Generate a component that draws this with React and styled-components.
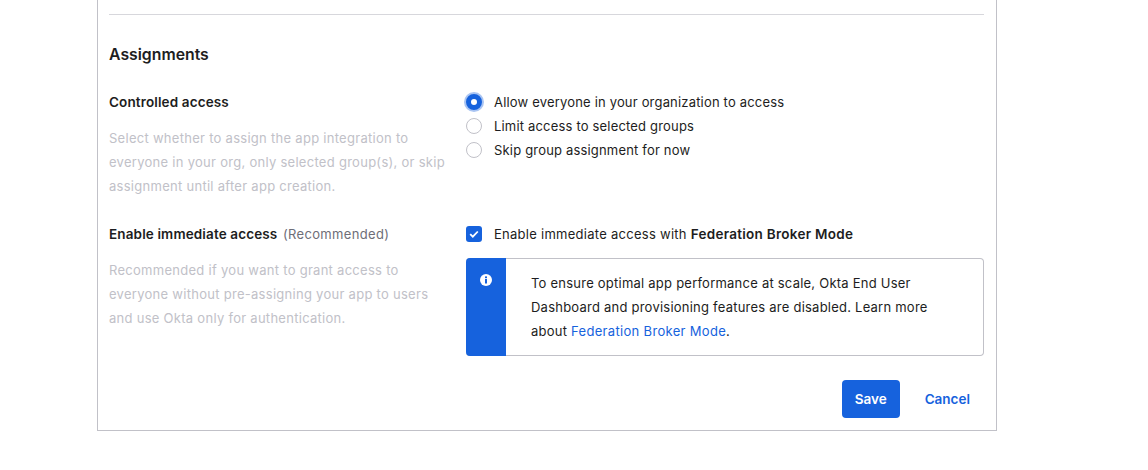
import React from 'react'
import styled, { createGlobalStyle } from 'styled-components'

const Global = createGlobalStyle`
html, body {
  margin: 0;
  padding: 0;
  background: #fff;
  font-family: Inter, "Liberation Sans", sans-serif;
  color: #1d1d21;
}
`

const Panel = styled.div`
  box-sizing: border-box;
  width: 900px;
  height: 431px;
  margin-left: 97px;
  padding: 14px 12px 0 11px;
  border: 1px solid #c1c1c8;
  border-top: none;
`

const Divider = styled.hr`
  margin: 0;
  border: none;
  border-top: 1px solid #d7d7dc;
`

const Title = styled.h2`
  margin: 30px 0 0;
  font-size: 15.8px;
  line-height: 20px;
  font-weight: 600;
  color: #1d1d21;
`

const Row = styled.div`
  display: grid;
  grid-template-columns: 357px 518px;
  margin-top: ${props => props.top}px;
`

const Label = styled.div`
  font-size: 13.5px;
  line-height: 24px;
  font-weight: 600;
  letter-spacing: 0.13px;
`

const Hint = styled.span`
  margin-left: 2px;
  font-size: 13px;
  font-weight: 400;
  letter-spacing: 0.35px;
  color: #6e6e78;
`

const Desc = styled.p`
  width: 340px;
  margin: 12px 0 0;
  font-size: 13px;
  line-height: 24px;
  letter-spacing: 0.28px;
  color: #c1c1c8;
`

const Option = styled.label`
  display: flex;
  align-items: center;
  height: 24px;
  font-size: 13px;
  letter-spacing: 0.18px;
`

const Radio = styled.span`
  box-sizing: border-box;
  width: 16px;
  height: 16px;
  margin-right: 12px;
  border-radius: 50%;
  ${props => props.checked
    ? 'border: 5px solid #1662dd; background: #fff; box-shadow: 0 0 0 2px #a9c4f2;'
    : 'border: 1.5px solid #c1c1c8; background: #fff;'}
`

const Check = styled.span`
  display: flex;
  align-items: center;
  justify-content: center;
  width: 16px;
  height: 16px;
  margin-right: 12px;
  border-radius: 3px;
  background: #1662dd;
`

const CheckText = styled.span`
  letter-spacing: 0.27px;
`

const Strong = styled.b`
  font-size: 13.5px;
  font-weight: 600;
`

const Callout = styled.div`
  box-sizing: border-box;
  display: flex;
  height: 98px;
  margin-top: 12px;
  border: 1px solid #c1c1c8;
  border-left: none;
  border-radius: 4px;
`

const CalloutBar = styled.div`
  flex: none;
  display: flex;
  justify-content: center;
  width: 40px;
  margin: -1px 0;
  padding-top: 16px;
  box-sizing: border-box;
  height: 98px;
  background: #1662dd;
  border-radius: 4px 0 0 4px;
`

const CalloutText = styled.p`
  margin: 0;
  padding: 12px 40px 0 25px;
  font-size: 13px;
  line-height: 24px;
  letter-spacing: 0.23px;
`

const A = styled.a`
  color: #1662dd;
  text-decoration: none;
  letter-spacing: 0.32px;
`

const Actions = styled.div`
  display: flex;
  justify-content: flex-end;
  align-items: center;
  gap: 25px;
  margin-top: 24px;
  padding-right: 14px;
`

const Save = styled.button`
  width: 58px;
  height: 38px;
  border: none;
  border-radius: 4px;
  background: #1662dd;
  color: #fff;
  font: 600 13.5px Inter, "Liberation Sans", sans-serif;
`

const Cancel = styled.button`
  padding: 0;
  border: none;
  background: none;
  color: #1662dd;
  font: 600 13.5px Inter, "Liberation Sans", sans-serif;
`

export default function App() {
  return (
    <>
      <Global />
      <Panel>
        <Divider />
        <Title>Assignments</Title>
        <Row top={25}>
          <div>
            <Label>Controlled access</Label>
            <Desc>
              Select whether to assign the app integration to everyone in your org, only selected group(s), or skip assignment until after app creation.
            </Desc>
          </div>
          <div>
            <Option><Radio checked />Allow everyone in your organization to access</Option>
            <Option><Radio />Limit access to selected groups</Option>
            <Option><Radio />Skip group assignment for now</Option>
          </div>
        </Row>
        <Row top={24}>
          <div>
            <Label>Enable immediate access <Hint>(Recommended)</Hint></Label>
            <Desc>
              Recommended if you want to grant access to everyone without pre-assigning your app to users and use Okta only for authentication.
            </Desc>
          </div>
          <div>
            <Option>
              <Check>
                <svg width="12" height="12" viewBox="0 0 12 12" fill="none">
                  <path d="M2.2 6.2l2.6 2.5 5-5.2" stroke="#fff" strokeWidth="1.8" />
                </svg>
              </Check>
              <CheckText>Enable immediate access with <Strong>Federation Broker Mode</Strong></CheckText>
            </Option>
            <Callout>
              <CalloutBar>
                <svg width="12" height="12" viewBox="0 0 12 12">
                  <circle cx="6" cy="6" r="6" fill="#fff" />
                  <rect x="5" y="5" width="2" height="4.5" fill="#1662dd" />
                  <rect x="5" y="2.4" width="2" height="1.8" fill="#1662dd" />
                </svg>
              </CalloutBar>
              <CalloutText>
                To ensure optimal app performance at scale, Okta End User Dashboard and provisioning features are disabled. Learn more about <A href="#">Federation Broker Mode</A>.
              </CalloutText>
            </Callout>
          </div>
        </Row>
        <Actions>
          <Save>Save</Save>
          <Cancel>Cancel</Cancel>
        </Actions>
      </Panel>
    </>
  )
}
